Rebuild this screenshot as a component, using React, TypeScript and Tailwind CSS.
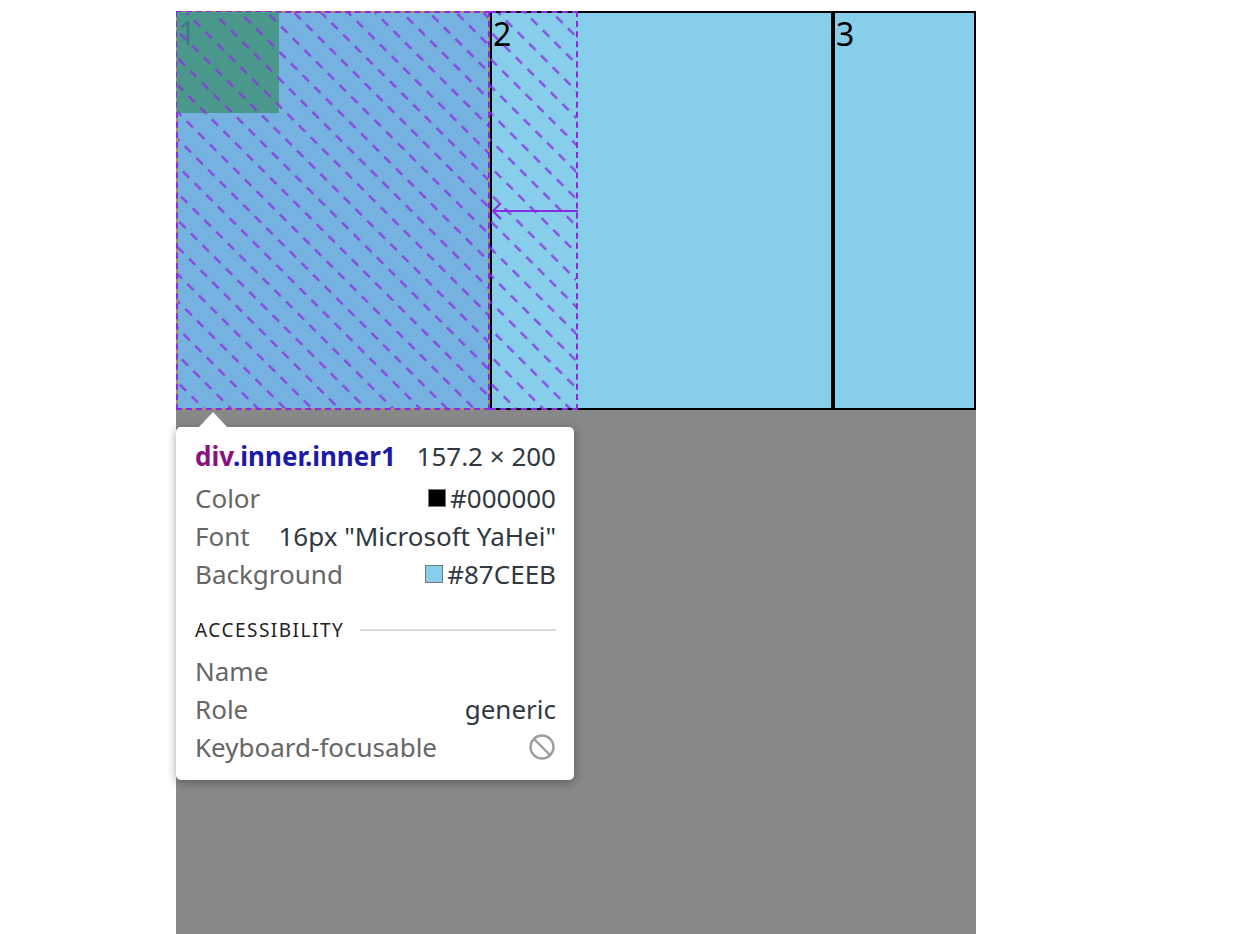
import React from "react";

const rows = [
  { label: "Color", value: "#000000", swatch: "bg-black" },
  { label: "Font", value: '16px "Microsoft YaHei"' },
  { label: "Background", value: "#87CEEB", swatch: "bg-[#87CEEB]" },
];

// diagonal dashed hatch, like the devtools flex overlay
function Hatch({ id }: { id: string }) {
  return (
    <svg className="absolute inset-0 h-full w-full" aria-hidden>
      <defs>
        <pattern id={id} width="19.1" height="16.5" patternUnits="userSpaceOnUse" patternTransform="rotate(-45)">
          <line x1="6" y1="0" x2="6" y2="16.5" stroke="#8b35e0" strokeWidth="2.4" strokeDasharray="9 7.5" opacity="0.85" />
        </pattern>
      </defs>
      <rect width="100%" height="100%" fill={`url(#${id})`} />
    </svg>
  );
}

function BlockIcon() {
  return (
    <svg width="28" height="28" viewBox="0 0 28 28" fill="none">
      <circle cx="14" cy="14" r="11.5" stroke="#9e9e9e" strokeWidth="2.4" />
      <line x1="6" y1="6" x2="22" y2="22" stroke="#9e9e9e" strokeWidth="2.4" />
    </svg>
  );
}

export default function App() {
  return (
    <div className="relative h-[934px] w-full overflow-hidden bg-white" style={{ fontFamily: "'Noto Sans', sans-serif" }}>
      {/* flex container */}
      <div className="ml-[176px] mt-[11px] flex h-[923px] w-[800px] items-start bg-[#888888]">
        {/* item 1 (highlighted) */}
        <div className="relative h-[399px] w-[314px] shrink-0 border-2 border-dashed border-[#8a2be2] bg-[#a89364]">
          <div className="relative h-full w-full bg-[#76B2DF]">
            <div className="absolute -left-[1px] -top-[1px] h-[101px] w-[102px] bg-[#4A978B]" />
            <span className="absolute left-[0px] top-[0px] text-[32px] leading-[40px] text-[#3f7886]">1</span>
            <Hatch id="h1" />
          </div>
        </div>

        {/* item 2 */}
        <div className="relative h-[399px] w-[343px] shrink-0 border-2 border-black bg-[#87CEEB]">
          <span className="absolute left-[1px] top-[1px] text-[32px] leading-[40px] text-black">2</span>
          <div className="absolute -top-[2px] -left-[2px] h-[399px] w-[88px] border-2 border-l-0 border-dashed border-[#8a2be2]">
            <Hatch id="h2" />
          </div>
          <svg className="absolute left-0 top-[190px]" width="88" height="18" viewBox="0 0 88 18" fill="none">
            <line x1="1" y1="8" x2="86" y2="8" stroke="#8a2be2" strokeWidth="2" />
            <polyline points="9,0 1,8 9,16" stroke="#8a2be2" strokeWidth="2" fill="none" />
          </svg>
        </div>

        {/* item 3 */}
        <div className="relative h-[399px] w-[143px] shrink-0 border-2 border-black bg-[#87CEEB]">
          <span className="absolute left-[1px] top-[1px] text-[32px] leading-[40px] text-black">3</span>
        </div>
      </div>

      {/* devtools tooltip */}
      <div className="absolute left-[176px] top-[427px] w-[398px] rounded-[5px] bg-white px-[19px] pb-[14px] pr-[18px] pt-[10px] shadow-[0_2px_10px_rgba(0,0,0,0.35)]">
        <div className="absolute -top-[15px] left-[22px] h-0 w-0 border-x-[15px] border-b-[16px] border-x-transparent border-b-white" />
        <div className="flex h-[38px] items-center justify-between text-[26px]">
          <span className="font-bold">
            <span className="text-[#881280]">div</span>
            <span className="text-[#1a1aa6]">.inner.inner1</span>
          </span>
          <span className="text-[#303942]">157.2 × 200</span>
        </div>
        <div className="mt-[4px]">
          {rows.map((r) => (
            <div key={r.label} className="flex h-[38px] items-center justify-between text-[26px]">
              <span className="text-[#666666]">{r.label}</span>
              <span className="flex items-center gap-[4px] text-[#303942]">
                {r.swatch && <span className={`h-[18px] w-[18px] border border-[#777] ${r.swatch}`} />}
                {r.value}
              </span>
            </div>
          ))}
        </div>
        <div className="mt-[18px] flex h-[38px] items-center gap-[16px]">
          <span className="text-[19px] tracking-[1.5px] text-[#222222]">ACCESSIBILITY</span>
          <div className="h-[2px] flex-1 bg-[#dddddd]" />
        </div>
        <div className="mt-[3px] flex h-[38px] items-center text-[26px] text-[#666666]">Name</div>
        <div className="flex h-[38px] items-center justify-between text-[26px]">
          <span className="text-[#666666]">Role</span>
          <span className="text-[#303942]">generic</span>
        </div>
        <div className="flex h-[38px] items-center justify-between text-[26px]">
          <span className="text-[#666666]">Keyboard-focusable</span>
          <BlockIcon />
        </div>
      </div>
    </div>
  );
}
